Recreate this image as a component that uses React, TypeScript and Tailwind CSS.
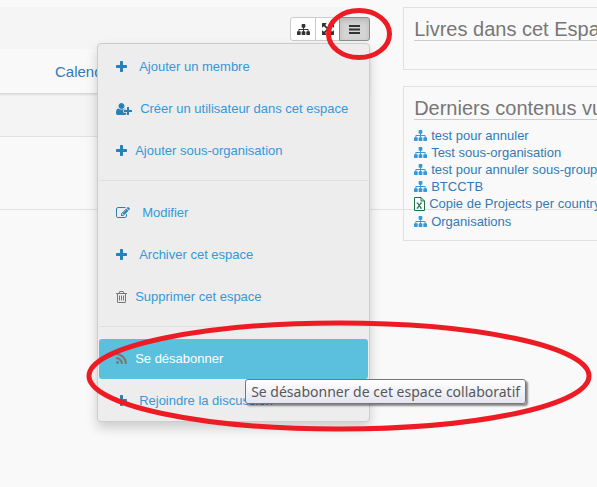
import React from "react";

type Glyph = { box: string; d: string };

const PLUS: Glyph = {
  box: "192 0 1408 1792",
  d: "M1600 736v192q0 40-28 68t-68 28h-416v416q0 40-28 68t-68 28h-192q-40 0-68-28t-28-68v-416h-416q-40 0-68-28t-28-68v-192q0-40 28-68t68-28h416v-416q0-40 28-68t68-28h192q40 0 68 28t28 68v416h416q40 0 68 28t28 68z",
};
const TRASH: Glyph = {
  box: "192 0 1408 1792",
  d: "M704 736v576q0 14-9 23t-23 9h-64q-14 0-23-9t-9-23v-576q0-14 9-23t23-9h64q14 0 23 9t9 23zm256 0v576q0 14-9 23t-23 9h-64q-14 0-23-9t-9-23v-576q0-14 9-23t23-9h64q14 0 23 9t9 23zm256 0v576q0 14-9 23t-23 9h-64q-14 0-23-9t-9-23v-576q0-14 9-23t23-9h64q14 0 23 9t9 23zm128 724v-948h-896v948q0 22 7 40.5t14.5 27 10.5 8.5h832q3 0 10.5-8.5t14.5-27 7-40.5zm-672-1076h448l-48-117q-7-9-17-11h-317q-10 2-17 11zm928 32v64q0 14-9 23t-23 9h-96v948q0 83-47 143.5t-113 60.5h-832q-66 0-113-58.5t-47-141.5v-952h-96q-14 0-23-9t-9-23v-64q0-14 9-23t23-9h309l70-167q15-37 54-63t79-26h320q40 0 79 26t54 63l70 167h309q14 0 23 9t9 23z",
};
const SITEMAP: Glyph = {
  box: "0 0 1792 1792",
  d: "M1792 1248v320q0 40-28 68t-68 28h-320q-40 0-68-28t-28-68v-320q0-40 28-68t68-28h96v-192h-512v192h96q40 0 68 28t28 68v320q0 40-28 68t-68 28h-320q-40 0-68-28t-28-68v-320q0-40 28-68t68-28h96v-192h-512v192h96q40 0 68 28t28 68v320q0 40-28 68t-68 28h-320q-40 0-68-28t-28-68v-320q0-40 28-68t68-28h96v-192q0-52 38-90t90-38h512v-192h-96q-40 0-68-28t-28-68v-320q0-40 28-68t68-28h320q40 0 68 28t28 68v320q0 40-28 68t-68 28h-96v192h512q52 0 90 38t38 90v192h96q40 0 68 28t28 68z",
};
const ARROWS: Glyph = {
  box: "128 0 1536 1792",
  d: "M1411 541l-355 355 355 355 144-144q29-31 70-14 39 17 39 59v448q0 26-19 45t-45 19h-448q-42 0-59-40-17-39 14-69l144-144-355-355-355 355 144 144q31 30 14 69-17 40-59 40h-448q-26 0-45-19t-19-45v-448q0-42 40-59 39-17 69 14l144 144 355-355-355-355-144 144q-19 19-45 19-12 0-24-5-40-17-40-59v-448q0-26 19-45t45-19h448q42 0 59 40 17 39-14 69l-144 144 355 355 355-355-144-144q-31-30-14-69 17-40 59-40h448q26 0 45 19t19 45v448q0 42-39 59-13 5-25 5-26 0-45-19z",
};
const EDIT: Glyph = {
  box: "0 0 1792 1792",
  d: "M888 1184l116-116-152-152-116 116v56h96v96h56zm440-720q-16-16-33 1l-350 350q-17 17-1 33t33-1l350-350q17-17 1-33zm80 594v190q0 119-84.5 203.5t-203.5 84.5h-832q-119 0-203.5-84.5t-84.5-203.5v-832q0-119 84.5-203.5t203.5-84.5h832q63 0 117 25 15 7 18 23 3 17-9 29l-49 49q-14 14-32 8-23-6-45-6h-832q-66 0-113 47t-47 113v832q0 66 47 113t113 47h832q66 0 113-47t47-113v-126q0-13 9-22l64-64q15-15 35-7t20 29zm-96-738l288 288-672 672h-288v-288zm444 132l-92 92-288-288 92-92q28-28 68-28t68 28l152 152q28 28 28 68t-28 68z",
};
const USER_PLUS: Glyph = {
  box: "0 0 2048 1792",
  d: "M704 896q-159 0-271.5-112.5t-112.5-271.5 112.5-271.5 271.5-112.5 271.5 112.5 112.5 271.5-112.5 271.5-271.5 112.5zm960 128h352q13 0 22.5 9.5t9.5 22.5v192q0 13-9.5 22.5t-22.5 9.5h-352v352q0 13-9.5 22.5t-22.5 9.5h-192q-13 0-22.5-9.5t-9.5-22.5v-352h-352q-13 0-22.5-9.5t-9.5-22.5v-192q0-13 9.5-22.5t22.5-9.5h352v-352q0-13 9.5-22.5t22.5-9.5h192q13 0 22.5 9.5t9.5 22.5v352zm-736 224q0 52 38 90t90 38h256v238q-68 50-171 50h-874q-121 0-194-69t-73-190q0-53 3.5-103.5t14-109 26.5-108.5 43-97.5 62-81 85.5-53.5 111.5-20q19 0 39 17 79 61 154.5 91.5t164.5 30.5 164.5-30.5 154.5-91.5q20-17 39-17 132 0 217 96h-223q-52 0-90 38t-38 90v192z",
};
const RSS: Glyph = {
  box: "192 0 1408 1792",
  d: "M576 1344q0 80-56 136t-136 56-136-56-56-136 56-136 136-56 136 56 56 136zm512 123q2 28-17 48-18 21-47 21h-135q-25 0-43-16.5t-20-41.5q-22-229-184.5-391.5t-391.5-184.5q-25-2-41.5-20t-16.5-43v-135q0-29 21-47 17-17 43-17h5q160 13 306 80.5t259 181.5q114 113 181.5 259t80.5 306zm512 2q2 27-18 47-18 20-46 20h-143q-26 0-44.5-17.5t-19.5-42.5q-12-215-101-408.5t-231.5-336-336-231.5-408.5-102q-25-1-42.5-19.5t-17.5-43.5v-143q0-28 20-46 18-18 44-18h3q262 13 501.5 120t425.5 294q187 186 294 425.5t120 501.5z",
};

function Icon({ glyph, className }: { glyph: Glyph; className: string }) {
  return (
    <svg viewBox={glyph.box} className={`shrink-0 fill-current ${className}`} aria-hidden="true">
      <path d={glyph.d} />
    </svg>
  );
}

function Divider() {
  return <li role="separator" className="mt-[7px] mb-[10px] h-px bg-[#e0e0e0]" />;
}

type ItemProps = {
  glyph: Glyph;
  label: string;
  iconClass?: string;
  wide?: boolean;
  tooltip?: string;
};

function MenuItem({ glyph, label, iconClass = "h-[14px] w-[11px] text-[#2980b9]", wide, tooltip }: ItemProps) {
  return (
    <li className="relative">
      <a
        href="#"
        className={`flex h-10 items-center rounded-[3px] pl-[17px] text-[13px] leading-5 ${wide ? "gap-3" : "gap-2"} ${
          tooltip ? "bg-[#5bc0de] text-white" : "text-[#3498db]"
        }`}
      >
        <Icon glyph={glyph} className={iconClass} />
        {label}
      </a>
      {tooltip && (
        <div
          role="tooltip"
          className="absolute top-10 left-[146px] z-10 rounded-[3px] border border-[#767676] bg-linear-to-b from-white to-[#e4e5f0] px-[5px] font-['Noto_Sans','Open_Sans',sans-serif] text-[14px] leading-[23px] whitespace-nowrap text-[#575757] shadow-[2px_2px_2px_rgba(0,0,0,0.45)]"
        >
          {tooltip}
        </div>
      )}
    </li>
  );
}

function SpaceMenu() {
  return (
    <div className="absolute top-[26px] right-0 z-10 w-[273px] rounded-[4px] border border-[#cccccc] bg-[#ededed] px-px pt-[3px] shadow-[0_6px_12px_rgba(0,0,0,0.176)]">
      <ul className="flex flex-col gap-[2px]">
        <MenuItem glyph={PLUS} label="Ajouter un membre" wide />
        <MenuItem
          glyph={USER_PLUS}
          label="Créer un utilisateur dans cet espace"
          iconClass="h-[14px] w-4 text-[#2980b9]"
        />
        <MenuItem glyph={PLUS} label="Ajouter sous-organisation" />
        <Divider />
        <MenuItem glyph={EDIT} label="Modifier" iconClass="size-[14px] text-[#2980b9]" wide />
        <MenuItem glyph={PLUS} label="Archiver cet espace" wide />
        <MenuItem glyph={TRASH} label="Supprimer cet espace" iconClass="h-[14px] w-[11px] text-[#777777]" />
        <Divider />
        <MenuItem
          glyph={RSS}
          label="Se désabonner"
          iconClass="h-[14px] w-[11px] text-[#777777]"
          tooltip="Se désabonner de cet espace collaboratif"
        />
        <MenuItem glyph={PLUS} label="Rejoindre la discussion" wide />
      </ul>
      <svg
        viewBox="0 0 506 112"
        className="pointer-events-none absolute -bottom-[11px] -left-3 z-20 h-[112px] w-[506px] max-w-none fill-none"
        aria-hidden="true"
      >
        <ellipse cx="253" cy="56" rx="250" ry="53" stroke="#ed1c24" strokeWidth="5" />
      </svg>
    </div>
  );
}

function Toolbar() {
  return (
    <div className="relative flex h-6 text-[#333333]">
      <button
        aria-label="Organigramme"
        className="flex w-[26px] items-center justify-center rounded-l-[3px] border border-[#cccccc] bg-white"
      >
        <Icon glyph={SITEMAP} className="size-[13px]" />
      </button>
      <button
        aria-label="Plein écran"
        className="-ml-px flex w-[25px] items-center justify-center border border-[#cccccc] bg-white"
      >
        <Icon glyph={ARROWS} className="h-[14px] w-3" />
      </button>
      <button
        aria-label="Menu"
        aria-expanded="true"
        className="-ml-px flex w-[31px] items-center justify-center rounded-r-[3px] border border-[#8c8c8c] bg-[#d4d4d4] shadow-[inset_0_3px_5px_rgba(0,0,0,0.125)]"
      >
        <svg viewBox="0 0 11 9" className="h-[9px] w-[11px] fill-current" aria-hidden="true">
          <rect width="11" height="2" />
          <rect y="3.5" width="11" height="2" />
          <rect y="7" width="11" height="2" />
        </svg>
      </button>
      <SpaceMenu />
      <svg
        viewBox="0 0 66 52"
        className="pointer-events-none absolute -top-[9px] -right-[22px] z-20 h-[52px] w-[66px] fill-none"
        aria-hidden="true"
      >
        <ellipse cx="33" cy="26" rx="30.5" ry="23.5" stroke="#ed1c24" strokeWidth="5" />
      </svg>
    </div>
  );
}

function ExcelIcon() {
  return (
    <svg viewBox="0 0 11 14" className="h-[14px] w-[11px] shrink-0" fill="none" stroke="#1e7145" aria-hidden="true">
      <path d="M.5.5H7L10.500 4V13.500H.5Z" fill="#fff" />
      <path d="M7 .5V4H10.500" />
      <path d="M3.500 6 7 11M7 6 3.500 11" strokeWidth="1.300" />
      <path d="M2.500 6H4.500M6 6H8M2.500 11.200H4.500M6 11.200H8" strokeWidth=".8" />
    </svg>
  );
}

function Card({ title, children, className }: { title: string; children?: React.ReactNode; className: string }) {
  return (
    <section className={`overflow-hidden border-y border-l border-[#e1e1e1] pt-[11px] pl-[10px] ${className}`}>
      <h2 className="border-b border-[#cccccc] text-[20px] leading-[21px] whitespace-nowrap text-[#777777]">{title}</h2>
      {children}
    </section>
  );
}

const recent = [
  { label: "test pour annuler" },
  { label: "Test sous-organisation" },
  { label: "test pour annuler sous-groupe" },
  { label: "BTCCTB" },
  { label: "Copie de Projects per country", excel: true },
  { label: "Organisations" },
];

export default function App() {
  return (
    <div className="relative min-h-screen overflow-hidden bg-[#f9f9f9] font-['Liberation_Sans',Arial,sans-serif]">
      <hr className="absolute inset-x-0 top-[209px] border-[#e1e1e1]" />
      <div className="relative grid grid-cols-[62fr_38fr] pt-[7px]">
        <main className="min-w-0">
          <header className="relative z-10 flex h-[42px] justify-end bg-[#f5f5f5] pt-[10px]">
            <Toolbar />
          </header>
          <nav className="relative border-b border-[#d8d8d8] pt-[11px] pb-[9px] pl-[55px] text-[15px] leading-6 shadow-[0_1px_2px_rgba(0,0,0,0.1)]">
            <a href="#" className="text-[#337ab7]">
              Calendrier
            </a>
          </nav>
          <div className="h-[43px] border-b border-[#e1e1e1] bg-[#f4f4f4]" />
        </main>
        <aside className="flex min-w-0 flex-col gap-4 pl-[33px]">
          <Card title="Livres dans cet Espace" className="pb-7" />
          <Card title="Derniers contenus vus" className="pb-[10px]">
            <ul className="pt-[7px]">
              {recent.map((r) => (
                <li key={r.label}>
                  <a
                    href="#"
                    className={`flex items-center gap-1 text-[13px] whitespace-nowrap text-[#337ab7] ${
                      r.excel ? "leading-[18px]" : "leading-[17px]"
                    }`}
                  >
                    {r.excel ? <ExcelIcon /> : <Icon glyph={SITEMAP} className="size-[13px] text-[#3498db]" />}
                    {r.label}
                  </a>
                </li>
              ))}
            </ul>
          </Card>
        </aside>
      </div>
    </div>
  );
}
